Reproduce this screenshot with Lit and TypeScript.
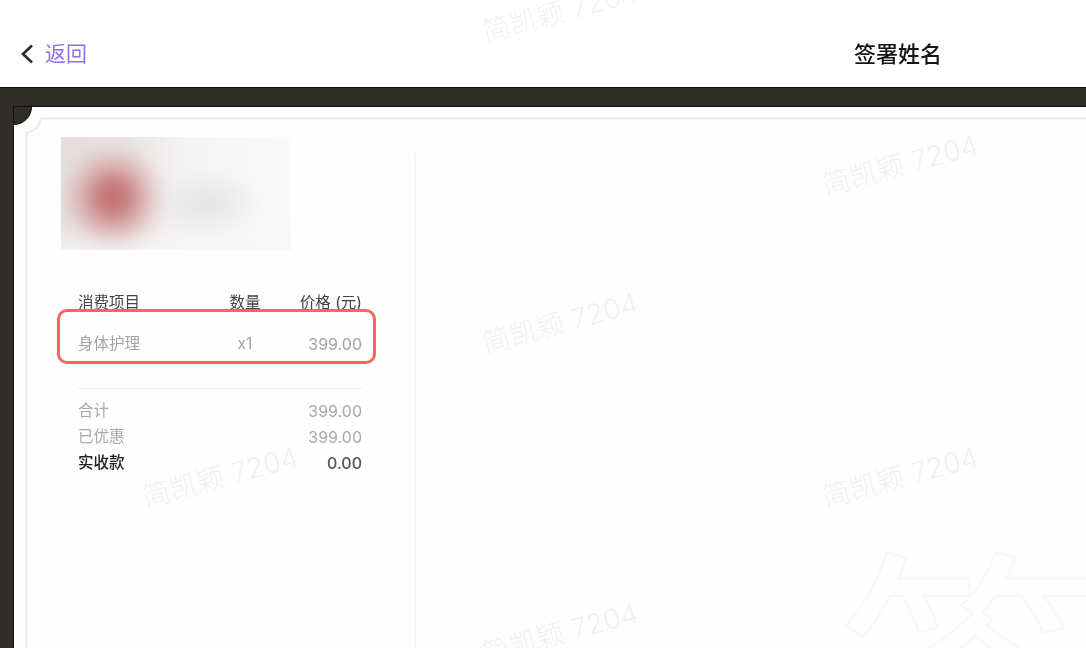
import { LitElement, html, css } from "lit";
import { customElement } from "lit/decorators.js";

const WATERMARKS = [
  [560, 12], [900, 165], [560, 323], [220, 477], [900, 477], [560, 633],
];
const TOTALS = [
  { label: "合计", value: "399.00", strong: false },
  { label: "已优惠", value: "399.00", strong: false },
  { label: "实收款", value: "0.00", strong: true },
];

@customElement("app-root")
export class AppRoot extends LitElement {
  static styles = css`
    :host {
      display: block;
      position: relative;
      width: 1086px;
      height: 648px;
      overflow: hidden;
      background: #fff;
      font-family: Inter, "Noto Sans CJK SC", sans-serif;
    }
    .page { display: flex; flex-direction: column; height: 648px; }
    .header {
      height: 87px;
      flex: none;
      display: flex;
      align-items: center;
      padding: 21px 0 0 20px;
      box-sizing: border-box;
      filter: blur(0.6px);
    }
    .back { display: flex; align-items: center; gap: 11px; width: 834px; }
    .back svg { display: block; }
    .back span { color: #8d70f4; font-size: 21px; line-height: 28px; }
    .title { color: #141414; font-size: 22px; line-height: 28px; font-weight: 500; }
    .frame {
      flex: 1;
      background: #302c27;
      border-top: 1px solid #111;
      padding: 19px 0 0 14px;
      display: flex;
      min-height: 0;
    }
    .card {
      flex: 1;
      position: relative;
      background: #fefefe;
      border-top: 1px solid #111;
      border-left: 1px solid #111;
      margin-top: -1px;
      margin-left: -1px;
      display: grid;
      grid-template-columns: 400px 1fr;
      overflow: hidden;
    }
    .card::before {
      content: "";
      position: absolute;
      left: -18px;
      top: -18px;
      width: 36px;
      height: 36px;
      border-radius: 50%;
      background: #302c27;
      border: 1px solid #111;
      box-sizing: border-box;
    }
    .ornament { position: absolute; left: -14px; top: -107px; pointer-events: none; filter: blur(0.4px); }
    .left {
      padding: 30px 0 0 47px;
      display: flex;
      flex-direction: column;
    }
    .logo {
      width: 230px;
      height: 113px;
      flex: none;
      overflow: hidden;
      background: #fbfbfb;
    }
    .logo-art {
      width: 250px;
      height: 133px;
      margin: -10px;
      filter: blur(7px);
      background:
        radial-gradient(circle 52px at 62px 70px, #c46f6f 0%, #c67c7c 28%, rgba(214,160,160,0.7) 60%, rgba(226,205,205,0) 100%),
        radial-gradient(ellipse 60px 34px at 155px 76px, #e4e4e4 0%, rgba(240,240,240,0) 100%),
        linear-gradient(180deg, rgba(251,251,251,0) 70%, #f8f7f7 100%),
        linear-gradient(90deg, #e5dcdc 0%, #e8e1e1 30%, #f5f3f3 52%, #fbfbfb 100%);
    }
    .table {
      width: 284px;
      margin-left: 17px;
      padding-top: 42px;
      filter: blur(0.7px);
      font-size: 15.5px;
      line-height: 22px;
    }
    .row { display: grid; grid-template-columns: 1fr 60px 87px; align-items: center; }
    .row > :nth-child(2) { text-align: center; }
    .row > :nth-child(3) { text-align: right; white-space: nowrap; }
    .head { color: #444; }
    .item { color: #a3a3a3; margin-top: 19px; }
    .item > :nth-child(3), .total > :last-child { font-size: 16px; }
    .rule { height: 1px; background: #f2efeb; margin: 33px 0 9px; }
    .total {
      display: flex;
      justify-content: space-between;
      color: #a9a9a9;
      height: 26px;
      line-height: 26px;
    }
    .total.strong { color: #222; font-weight: 500; }
    .total.strong > :last-child { color: #555; }
    .right { border-left: 2px solid #f7f4f1; margin-top: 46px; }
    .highlight {
      position: absolute;
      left: 57px;
      top: 309px;
      width: 319px;
      height: 55px;
      box-sizing: border-box;
      border: 3.5px solid #ee6a5e;
      border-radius: 10px;
      filter: blur(0.5px);
    }
    .mark {
      position: absolute;
      white-space: nowrap;
      color: rgba(120, 125, 135, 0.11);
      font-size: 28px;
      line-height: 30px;
      font-weight: 300;
      transform: translate(-50%, -50%) rotate(-15deg);
      pointer-events: none;
    }
    .sign {
      position: absolute;
      left: 835px;
      top: 517px;
      font-family: "Noto Sans CJK SC", sans-serif;
      font-size: 280px;
      line-height: 300px;
      color: transparent;
      -webkit-text-stroke: 1.5px #f8f6f4;
      pointer-events: none;
    }
  `;

  render() {
    return html`
      <div class="page">
        <header class="header">
          <div class="back">
            <svg width="14" height="20" viewBox="0 0 14 20">
              <path d="M12 1.5 L3 10 L12 18.5" fill="none" stroke="#2e2e2e" stroke-width="2.7" />
            </svg>
            <span>返回</span>
          </div>
          <div class="title">签署姓名</div>
        </header>
        <div class="frame">
          <div class="card">
            <section class="left">
              <div class="logo"><div class="logo-art"></div></div>
              <div class="table">
                <div class="row head"><span>消费项目</span><span>数量</span><span>价格 (元)</span></div>
                <div class="row item"><span>身体护理</span><span>x1</span><span>399.00</span></div>
                <div class="rule"></div>
                ${TOTALS.map(
                  (t) => html`<div class="total ${t.strong ? "strong" : ""}"><span>${t.label}</span><span>${t.value}</span></div>`
                )}
              </div>
            </section>
            <section class="right"></section>
            <svg class="ornament" width="1086" height="648" viewBox="0 0 1086 648">
              <path d="M1086 118.5 H41 Q38 131 26.5 133 V648" fill="none" stroke="#f1e8e0" stroke-width="2" />
            </svg>
          </div>
        </div>
      </div>
      <div class="sign">签</div>
      ${WATERMARKS.map(
        ([x, y]) => html`<div class="mark" style="left:${x}px;top:${y}px">简凯颖 7204</div>`
      )}
      <div class="highlight"></div>
    `;
  }
}
